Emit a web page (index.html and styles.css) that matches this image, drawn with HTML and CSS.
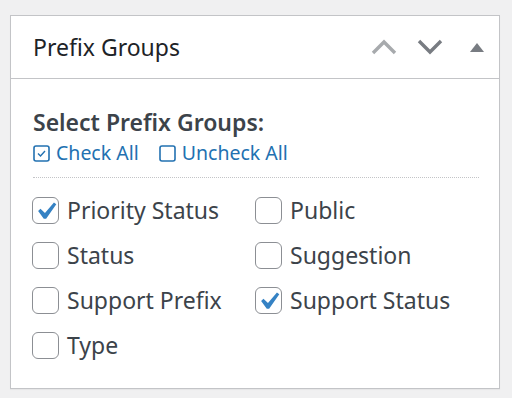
FILE: index.html
```html
<!DOCTYPE html>
<html lang="en">
<head>
    <meta charset="UTF-8">
    <title>Prefix Groups</title>
    <link rel="stylesheet" href="styles.css">
</head>
<body>
    <div class="postbox">
        <!-- Box header with move / toggle handles -->
        <div class="postbox-header">
            <h2>Prefix Groups</h2>
            <div class="handles">
                <svg class="handle up" width="26" height="16" viewBox="0 0 26 16"><path d="M2 14 L13 3 L24 14" fill="none" stroke="currentColor" stroke-width="3.4"/></svg>
                <svg class="handle down" width="26" height="16" viewBox="0 0 26 16"><path d="M2 2 L13 13 L24 2" fill="none" stroke="currentColor" stroke-width="3.4"/></svg>
                <svg class="handle toggle" width="16" height="12" viewBox="0 0 16 12"><path d="M1 11 L8 2 L15 11 Z" fill="currentColor"/></svg>
            </div>
        </div>

        <div class="inside">
            <p class="select-title">Select Prefix Groups:</p>
            <div class="bulk-links">
                <a href="#" class="bulk">
                    <svg width="17" height="17" viewBox="0 0 17 17"><rect x="1" y="1" width="15" height="15" rx="2" fill="none" stroke="currentColor" stroke-width="1.6"/><path d="M5 8.5 L7.5 11 L12 6" fill="none" stroke="currentColor" stroke-width="1.4"/></svg>
                    Check All
                </a>
                <a href="#" class="bulk">
                    <svg width="17" height="17" viewBox="0 0 17 17"><rect x="1" y="1" width="15" height="15" rx="2" fill="none" stroke="currentColor" stroke-width="1.6"/></svg>
                    Uncheck All
                </a>
            </div>

            <div class="groups">
                <label class="group"><span class="cb checked"><svg viewBox="0 0 20 20"><path d="M14.83 4.89l1.34.94-5.81 8.38H9.02L5.78 9.67l1.34-1.25 2.57 2.4z" fill="#3582c4"/></svg></span>Priority Status</label>
                <label class="group"><span class="cb"></span>Public</label>
                <label class="group"><span class="cb"></span>Status</label>
                <label class="group"><span class="cb"></span>Suggestion</label>
                <label class="group"><span class="cb"></span>Support Prefix</label>
                <label class="group"><span class="cb checked"><svg viewBox="0 0 20 20"><path d="M14.83 4.89l1.34.94-5.81 8.38H9.02L5.78 9.67l1.34-1.25 2.57 2.4z" fill="#3582c4"/></svg></span>Support Status</label>
                <label class="group"><span class="cb"></span>Type</label>
            </div>
        </div>
    </div>
</body>
</html>
```

FILE: styles.css
```css
body {
    margin: 0;
    padding: 15px 12px 10px 10px;
    background: #f0f0f1;
    font-family: 'Noto Sans', 'Open Sans', sans-serif;
    color: #3c434a;
}

.postbox {
    width: 488px;
    background: #fff;
    border: 1px solid #c3c4c7;
    box-shadow: 0 1px 1px rgba(0, 0, 0, 0.04);
}

/* Header */
.postbox-header {
    display: flex;
    align-items: center;
    justify-content: space-between;
    height: 62px;
    padding: 0 14px 0 22px;
    border-bottom: 1px solid #c3c4c7;
}

.postbox-header h2 {
    margin: 0;
    font-size: 23px;
    font-weight: 400;
    color: #1d2327;
}

.handles {
    display: flex;
    align-items: center;
    gap: 20px;
}

.handle.up {
    color: #a7aaad;
}

.handle.down {
    color: #787c82;
}

.handle.toggle {
    color: #787c82;
    margin-left: 6px;
}

/* Inside */
.inside {
    padding: 28px 20px 29px 22px;
}

.select-title {
    margin: 0;
    font-size: 23px;
    font-weight: 600;
    line-height: 30px;
}

.bulk-links {
    display: flex;
    gap: 20px;
    margin-top: 4px;
    padding-bottom: 12px;
    border-bottom: 1px dotted #c3c4c7;
}

.bulk {
    display: flex;
    align-items: center;
    gap: 6px;
    color: #2271b1;
    text-decoration: none;
    font-size: 19.5px;
    line-height: 24px;
}

.groups {
    display: grid;
    grid-template-columns: 223px 1fr;
    row-gap: 18px;
    padding-top: 19px;
    margin-left: -1px;
}

.group {
    display: flex;
    align-items: center;
    gap: 8px;
    font-size: 23px;
    line-height: 27px;
}

/* Checkbox look */
.cb {
    position: relative;
    width: 27px;
    height: 27px;
    box-sizing: border-box;
    border: 1px solid #8c8f94;
    border-radius: 6px;
    background: #fff;
    flex-shrink: 0;
}

.cb svg {
    position: absolute;
    top: -4px;
    left: -5px;
    width: 35px;
    height: 35px;
}
```
